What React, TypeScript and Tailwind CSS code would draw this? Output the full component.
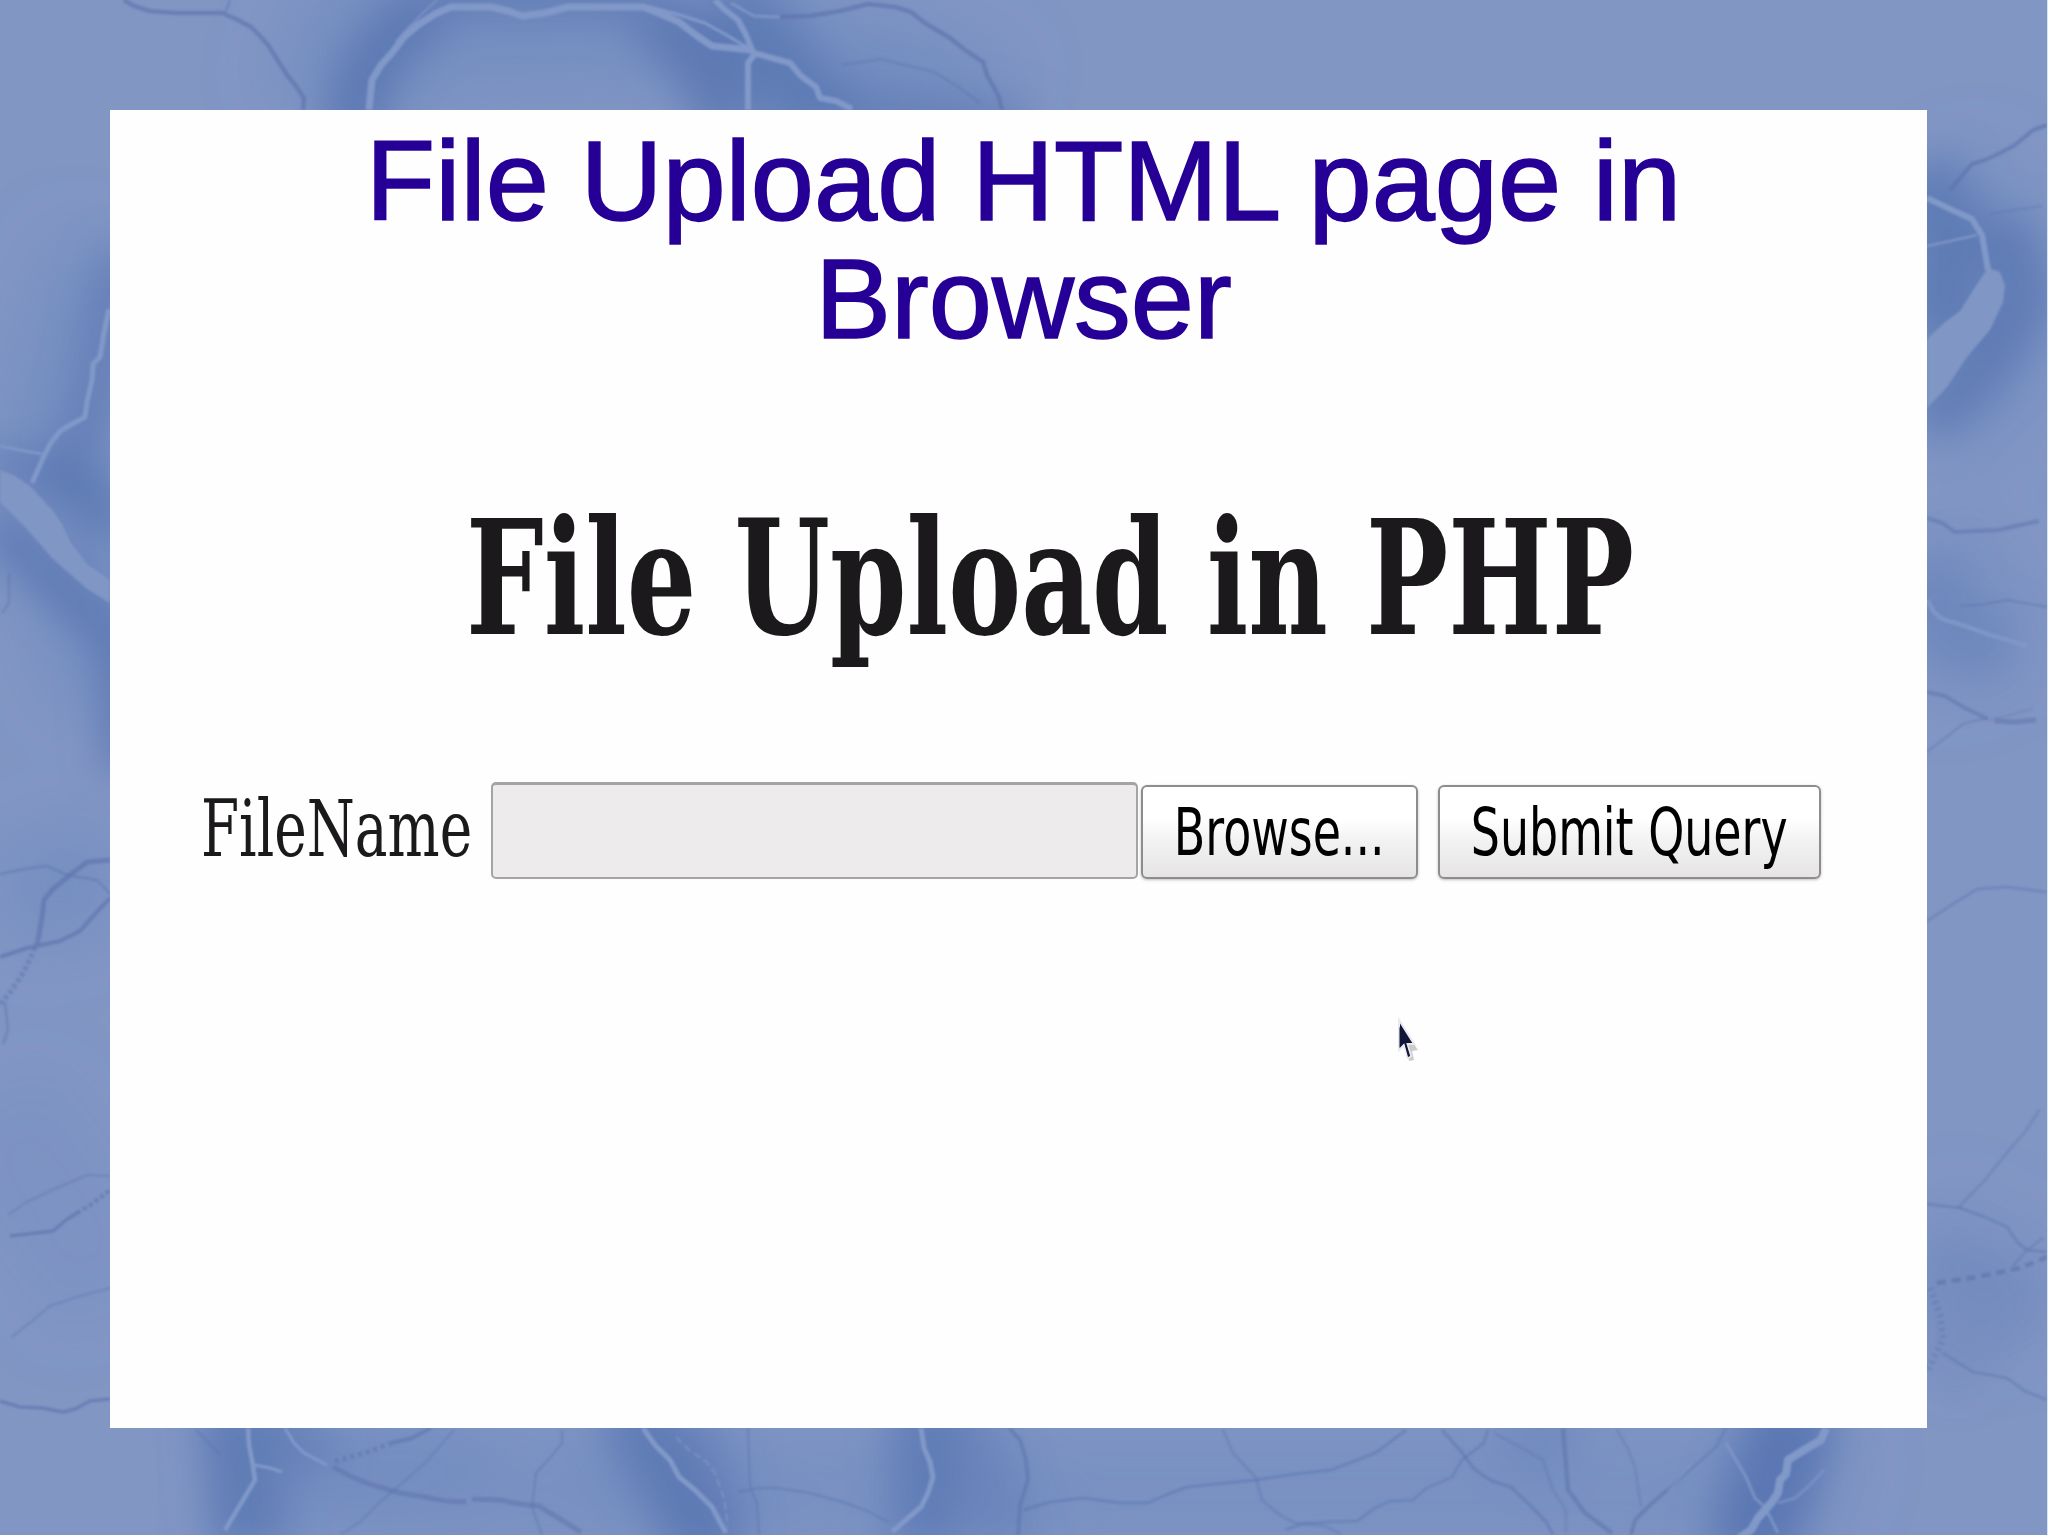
type Vein = { d: string; w: number; o?: number; dash?: string };

// wide, faint shading under the sharper glows
const hazes: Vein[] = [
  { d: 'M330 120 L380 20 L700 10 L860 110', w: 150, o: 0.35 },
  { d: 'M860 60 L1000 110', w: 110, o: 0.35 },
  { d: 'M120 250 L60 430 L120 700', w: 130, o: 0.35 },
  { d: 'M0 900 L120 870', w: 110, o: 0.35 },
  { d: 'M-10 1100 L120 1300', w: 140, o: 0.15 },
  { d: 'M1930 180 L2010 300 L1930 420', w: 130, o: 0.35 },
  { d: 'M1930 540 L1990 680', w: 120, o: 0.25 },
  { d: 'M1920 1240 L2040 1310', w: 120, o: 0.2 },
  { d: 'M230 1490 L1700 1490', w: 120, o: 0.25 },
  { d: 'M250 1470 L480 1450', w: 90, o: 0.25 },
  { d: 'M630 1420 L740 1540', w: 110, o: 0.25 },
  { d: 'M940 1420 L1000 1540', w: 110, o: 0.25 },
  { d: 'M1800 1420 L1740 1540', w: 140, o: 0.3 },
];

const glows: Vein[] = [
  { d: 'M350 150 L358 90 L385 45 L430 5', w: 56, o: 0.8 },
  { d: 'M430 -5 L650 -5', w: 44, o: 0.6 },
  { d: 'M650 10 L700 60 L735 130', w: 60, o: 0.75 },
  { d: 'M720 0 L770 50 L830 130', w: 76, o: 0.7 },
  { d: 'M830 110 L1030 130', w: 50, o: 0.55 },
  { d: 'M125 250 L105 330 L95 400 L60 480 L-10 460', w: 40, o: 0.6 },
  { d: 'M60 470 L120 530', w: 50, o: 0.7 },
  { d: 'M-10 520 L60 585 L120 640 L125 770', w: 42, o: 0.8 },
  { d: 'M1915 170 L1950 230 L1940 340', w: 76, o: 0.7 },
  { d: 'M2005 220 L2026 300 L1985 365 L1925 425', w: 50, o: 0.75 },
  { d: 'M1920 560 L1950 635 L2010 650', w: 70, o: 0.3 },
  { d: 'M1920 1260 L2010 1300 L1930 1370', w: 80, o: 0.2 },
  { d: 'M235 1400 L250 1550', w: 76, o: 0.7 },
  { d: 'M285 1410 L320 1470', w: 50, o: 0.45 },
  { d: 'M625 1400 L670 1480 L715 1560', w: 66, o: 0.7 },
  { d: 'M690 1410 L725 1540', w: 50, o: 0.35 },
  { d: 'M925 1400 L925 1550', w: 68, o: 0.65 },
  { d: 'M960 1400 L1010 1550', w: 60, o: 0.3 },
  { d: 'M1800 1400 L1745 1560', w: 86, o: 0.85 },
  { d: 'M1510 1410 L1570 1450', w: 90, o: 0.25 },
];

const lights: Vein[] = [
  { d: 'M369 110 L372 80 L381 65 L392 53 L404 37 L418 25 L435 14 L451 7 L490 7 L508 11 L522 16 L545 13 L568 7 L643 7 L661 14 L679 22 L697 36 L712 46 L751 50', w: 7 },
  { d: 'M437 0 L424 12 L408 28 L395 43', w: 2, o: 0.7 },
  { d: 'M715 0 L724 9 L738 20 L746 35 L754 55 L748 63 L748 110', w: 6 },
  { d: 'M754 53 L772 58 L790 63 L801 76 L816 87 L820 98 L836 101 L852 109', w: 6 },
  { d: 'M643 5 L680 15 L705 23 L730 37 L748 48', w: 3 },
  { d: 'M731 3 L745 11 L754 16 L780 17', w: 3, o: 0.8 },
  { d: 'M109 309 L104 333 L100 357 L93 364 L92 380 L87 402 L85 417 L72 424 L60 431 L50 444 L43 458 L32 483', w: 5 },
  { d: 'M0 446 L20 450 L42 454', w: 2.5 },
  { d: 'M1927 198 L1950 209 L1972 219 L1982 235 L1985 252 L1988 270', w: 6 },
  { d: 'M1927 246 L1955 240 L1977 235', w: 2 },
  { d: 'M1927 600 L1934 612 L1942 619 L1965 626 L1990 635 L2008 640 L2027 646', w: 4, o: 0.9 },
  { d: 'M248 1428 L249 1445 L252 1460 L255 1480 L240 1505 L225 1530', w: 4.5 },
  { d: 'M255 1465 L270 1468 L282 1472', w: 3 },
  { d: 'M285 1428 L294 1443 L304 1453 L327 1465', w: 3 },
  { d: 'M643 1428 L655 1445 L670 1460 L679 1477 L695 1490 L712 1507 L726 1533', w: 5 },
  { d: 'M676 1437 L690 1451 L706 1461 L715 1473 L724 1498 L728 1527', w: 2, o: 0.7, dash: '8 4' },
  { d: 'M921 1428 L924 1448 L930 1462 L933 1477 L928 1493 L921 1507 L908 1518 L892 1532', w: 5 },
  { d: 'M1726 1443 L1736 1460 L1746 1477 L1755 1498 L1765 1507 L1778 1533', w: 3, o: 0.8 },
  { d: 'M1826 1428 L1821 1440 L1804 1450 L1788 1460 L1786 1474 L1780 1480 L1778 1493 L1772 1502 L1758 1518 L1751 1530 L1739 1538', w: 8 },
  { d: 'M1824 1470 L1810 1485 L1795 1498 L1778 1503', w: 3, o: 0.6 },
  { d: 'M1690 1465 L1670 1490', w: 2, o: 0.5 },
];

const darks: Vein[] = [
  { d: 'M124 0 L134 6 L150 11 L176 13 L222 13 L238 20 L251 27 L260 36 L268 45 L287 75 L296 86 L304 98 L303 110', w: 4.5, o: 0.6 },
  { d: 'M230 0 L228 6 L225 12', w: 2.5, o: 0.45 },
  { d: 'M780 17 L810 16 L840 11 L868 4 L895 7 L911 12 L925 23 L950 38 L965 50 L983 62 L987 75 L999 97 L1002 110', w: 4.5, o: 0.6 },
  { d: 'M842 65 L862 62 L881 59 L905 65 L934 72 L960 88 L980 103', w: 3, o: 0.35 },
  { d: 'M9 573 L9 603 L2 613', w: 2.5, o: 0.4 },
  { d: 'M0 874 L25 869 L47 866 L67 875 L97 880 L110 894', w: 2.5, o: 0.45 },
  { d: 'M0 957 L27 948 L60 941 L80 931 L95 914 L110 898', w: 4, o: 0.6 },
  { d: 'M110 860 L87 862 L70 875 L53 889 L44 900 L42 917 L38 941', w: 5, o: 0.6 },
  { d: 'M38 941 L31 957 L23 973 L12 990 L0 1004', w: 5, o: 0.5, dash: '4 3' },
  { d: 'M5 1002 L8 1030 L3 1044', w: 3, o: 0.4 },
  { d: 'M8 1215 L25 1203 L50 1191 L87 1175 L110 1176', w: 2.5, o: 0.35 },
  { d: 'M10 1236 L53 1231 L66 1220 L77 1213', w: 3.5, o: 0.6 },
  { d: 'M77 1213 L92 1204 L110 1190', w: 4, o: 0.6, dash: '4 3' },
  { d: 'M12 1337 L32 1321 L50 1306 L80 1296 L110 1288', w: 2.5, o: 0.35 },
  { d: 'M0 1401 L20 1407 L42 1408 L63 1412 L75 1409 L90 1401 L110 1399', w: 3.5, o: 0.6 },
  { d: 'M2047 125 L2033 130 L2015 145 L2000 153 L1985 160 L1972 164 L1960 178 L1950 190', w: 4, o: 0.6 },
  { d: 'M1990 214 L2015 210 L2042 206', w: 2, o: 0.4 },
  { d: 'M1927 518 L1942 523 L1955 532 L1998 530 L2020 525 L2039 521', w: 4, o: 0.5 },
  { d: 'M1960 606 L1985 604 L2007 600 L2030 604 L2047 607', w: 2.5, o: 0.4 },
  { d: 'M1927 692 L1945 696 L1965 708 L1988 719', w: 4, o: 0.5 },
  { d: 'M1995 721 L2015 722 L2036 720', w: 5, o: 0.5 },
  { d: 'M1927 752 L1945 738 L1963 724 L1987 718', w: 2.5, o: 0.35 },
  { d: 'M1990 720 L2013 714 L2033 709', w: 2, o: 0.3 },
  { d: 'M1927 921 L1950 906 L1977 889 L2007 887 L2047 892', w: 3, o: 0.4 },
  { d: 'M2040 1109 L2025 1132 L2010 1149 L1985 1180 L1958 1208', w: 3, o: 0.35 },
  { d: 'M1927 1204 L1960 1208 L1985 1217 L2007 1227 L2018 1243 L2027 1250 L2047 1252', w: 3, o: 0.45 },
  { d: 'M2043 1238 L2027 1250 L2013 1266', w: 2.5, o: 0.4 },
  { d: 'M1937 1283 L1977 1277 L2020 1268 L2047 1257', w: 4.5, o: 0.6, dash: '9 6' },
  { d: 'M1930 1288 L1940 1316 L1943 1339 L1927 1372', w: 7, o: 0.4, dash: '3 4' },
  { d: 'M1943 1353 L1973 1372 L2007 1378 L2025 1391 L2047 1400', w: 3, o: 0.4 },
  { d: 'M196 1430 L208 1442 L220 1455', w: 3, o: 0.35 },
  { d: 'M431 1428 L412 1438 L392 1443', w: 4, o: 0.55 },
  { d: 'M392 1443 L365 1453 L333 1462', w: 5, o: 0.5, dash: '4 4' },
  { d: 'M333 1467 L352 1477 L372 1485 L400 1493 L425 1497 L445 1501 L466 1502', w: 5, o: 0.5 },
  { d: 'M472 1499 L500 1500 L520 1504 L539 1506 L560 1519 L581 1532', w: 5, o: 0.5 },
  { d: 'M454 1430 L440 1446 L425 1463 L400 1485 L379 1503 L360 1522 L340 1535', w: 2.5, o: 0.35 },
  { d: 'M562 1430 L562 1443 L550 1458 L536 1473 L532 1507 L542 1535', w: 2.5, o: 0.4 },
  { d: 'M748 1428 L750 1487 L757 1503 L759 1535', w: 2.5, o: 0.4 },
  { d: 'M738 1492 L758 1488 L777 1488 L810 1493 L843 1502 L870 1512 L888 1522', w: 2.5, o: 0.4 },
  { d: 'M1009 1428 L1020 1440 L1026 1460 L1028 1480 L1020 1505 L1018 1535', w: 4, o: 0.55 },
  { d: 'M1024 1510 L1050 1502 L1083 1498 L1120 1503 L1148 1503 L1166 1495 L1187 1487 L1225 1483 L1256 1480 L1295 1474 L1331 1470 L1355 1461 L1377 1452 L1406 1430', w: 3, o: 0.45 },
  { d: 'M1223 1430 L1233 1453 L1256 1478 L1262 1500 L1280 1515 L1295 1523 L1325 1526 L1341 1534', w: 3, o: 0.35 },
  { d: 'M1285 1530 L1305 1523 L1357 1521 L1375 1508 L1390 1501 L1413 1500 L1425 1489 L1452 1477 L1462 1460 L1484 1443 L1488 1430', w: 3, o: 0.4 },
  { d: 'M1442 1430 L1460 1450 L1475 1470 L1492 1481 L1511 1487 L1530 1505 L1547 1523 L1553 1535', w: 3.5, o: 0.45 },
  { d: 'M1494 1433 L1520 1447 L1543 1460 L1553 1490 L1566 1510 L1566 1533', w: 3, o: 0.3 },
  { d: 'M1563 1428 L1566 1465 L1568 1490 L1585 1513 L1612 1533', w: 4.5, o: 0.55 },
  { d: 'M1617 1430 L1627 1447 L1635 1467 L1641 1507', w: 2.5, o: 0.35 },
  { d: 'M1726 1428 L1716 1447 L1690 1470 L1667 1490', w: 3, o: 0.4 },
  { d: 'M1667 1490 L1650 1505 L1635 1520 L1631 1535', w: 4, o: 0.55 },
];

const Veins = ({ items, color }: { items: Vein[]; color: string }) => (
  <g stroke={color} fill="none" strokeLinejoin="round">
    {items.map((vein) => (
      <path
        key={vein.d}
        d={vein.d}
        strokeWidth={vein.w}
        strokeOpacity={vein.o ?? 1}
        strokeDasharray={vein.dash}
      />
    ))}
  </g>
);

const MarbleBackground = () => (
  <svg
    className="absolute inset-0"
    width="2048"
    height="1535"
    viewBox="0 0 2048 1535"
  >
    <defs>
      <filter id="haze" filterUnits="userSpaceOnUse" x="-200" y="-200" width="2450" height="1950">
        <feGaussianBlur stdDeviation="34" />
      </filter>
      <filter id="glow" filterUnits="userSpaceOnUse" x="-100" y="-100" width="2250" height="1750">
        <feGaussianBlur stdDeviation="20" />
      </filter>
      <filter id="soft" filterUnits="userSpaceOnUse" x="0" y="0" width="2048" height="1535">
        <feGaussianBlur stdDeviation="0.8" />
      </filter>
    </defs>
    <rect width="2048" height="1535" fill="#8296c4" />
    <g filter="url(#haze)">
      <Veins items={hazes} color="#5f80ba" />
    </g>
    <g filter="url(#glow)">
      <Veins items={glows} color="#5573b0" />
    </g>
    <g filter="url(#soft)">
      <Veins items={darks} color="#5b72ac" />
      <Veins items={lights} color="#8199c9" />
      <g fill="#8096c5">
        <path d="M0 470 L15 476 L30 486 L53 511 L62 524 L70 541 L87 564 L110 580 L110 603 L87 589 L53 559 L27 529 L0 502Z" />
        <path d="M1988 268 L2000 272 L2005 286 L2003 302 L1990 330 L1967 357 L1947 387 L1927 408 L1927 339 L1945 322 L1960 311 L1977 284Z" />
      </g>
    </g>
    <rect x="2047" width="1" height="1535" fill="#d5e2f0" />
  </svg>
);

const FormButton = ({ label, className }: { label: string; className: string }) => (
  <button
    type="button"
    className={`mt-[3px] flex h-[94px] shrink-0 items-center justify-center rounded-[6px] border-2 border-[#8e8d8e] bg-linear-to-b from-white from-35% via-[#f3f2f3] via-60% to-[#e6e4e5] shadow-[0_1px_3px_rgba(0,0,0,0.25)] ${className}`}
  >
    <span className="block shrink-0 scale-x-[0.688] font-['DejaVu_Sans'] text-[66.7px] leading-[90px] whitespace-nowrap text-black">
      {label}
    </span>
  </button>
);

const Cursor = () => (
  <svg
    className="absolute top-[1016px] left-[1396px]"
    width="26"
    height="46"
    viewBox="0 0 26 46"
  >
    <path d="M6 10 L22 34 L16 35 L18 44 L13 45Z" fill="#000" opacity="0.2" />
    <path
      d="M3 4 L3 34 L8 29 L12 42 L15 40 L11 28 L18 28Z"
      fill="#10153a"
      stroke="#e9e9ee"
      strokeWidth="2"
    />
    <path d="M3.5 11 L3.5 32 L8 26 L12 41 L14 40 L10 26 L16 27Z" fill="#10153a" />
  </svg>
);

export default function App() {
  return (
    <div className="relative flex h-[1535px] w-[2048px] overflow-hidden">
      <MarbleBackground />

      <main className="relative mt-[110px] ml-[110px] h-[1318px] w-[1817px] bg-[#fefefe]">
        <h1 className="px-[240px] pt-[12px] text-center font-['Liberation_Sans'] text-[113.6px] leading-[118px] text-[#260096] [-webkit-text-stroke:1.6px_#260096]">
          <span className="ml-[10px] block whitespace-nowrap">
            File Upload HTML page in
          </span>
          <span className="ml-[10px] block">Browser</span>
        </h1>

        <h2 className="mt-[140px] ml-[356px] w-[1700px] origin-left scale-x-[0.6905] font-['DejaVu_Serif'] text-[158.5px] leading-[160px] font-bold whitespace-nowrap text-[#1b191b]">
          File Upload in PHP
        </h2>

        <form className="mt-[124px] ml-[91px] flex items-start">
          <label className="w-[290px] shrink-0 origin-left scale-x-[0.706] font-['DejaVu_Serif'] text-[77.8px] leading-[94px] whitespace-nowrap text-[#1b191b]">
            FileName
          </label>
          <div className="h-[97px] w-[647px] shrink-0 rounded-[5px] border-2 border-t-3 border-[#a5a4a5] bg-[#edebec]" />
          <FormButton label="Browse..." className="ml-[3px] w-[277px]" />
          <FormButton label="Submit Query" className="ml-[20px] w-[383px]" />
        </form>
      </main>

      <Cursor />
    </div>
  );
}
